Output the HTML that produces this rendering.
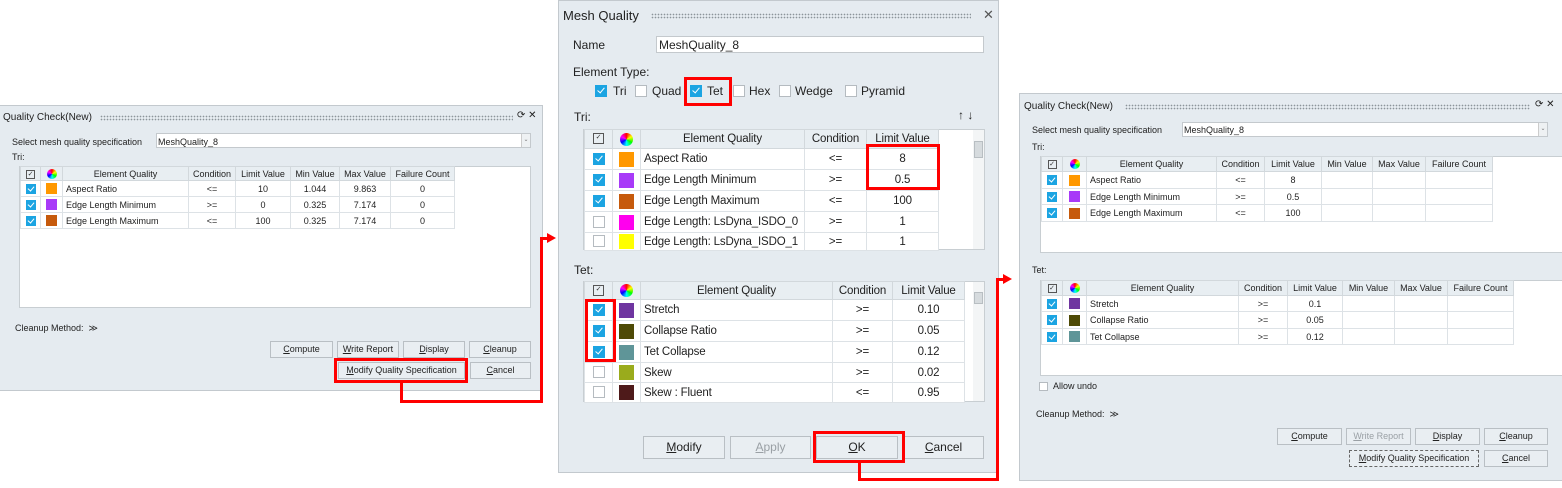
<!DOCTYPE html>
<html><head><meta charset="utf-8"><style>
*{box-sizing:border-box;margin:0;padding:0}
body{width:1562px;height:488px;background:#fff;position:relative;overflow:hidden;font-family:"Liberation Sans",sans-serif;color:#222}
.a{position:absolute}
.panel{position:absolute;background:#e5ebf0;border:1px solid #c3c9ce}
.t{position:absolute;white-space:nowrap}
.dots{position:absolute;height:6px;background-image:radial-gradient(circle,#8c949a 0.7px,transparent 0.9px);background-size:3px 3px}
.btn{position:absolute;background:#e9eef2;border:1px solid #b9bfc4;text-align:center;white-space:nowrap}
.inp{position:absolute;background:#fff;border:1px solid #c4c9cd}
.red{position:absolute;border:3px solid #f00}
.rl{position:absolute;background:#f00}
table{position:absolute;border-collapse:collapse;table-layout:fixed;background:#fff}
td{border:1px solid #dde2e6;white-space:nowrap;overflow:hidden;text-align:center;padding:0}
tr.h td{background:#e8eef2;border-color:#d2d8dc}
td.l{text-align:left;padding-left:3px}
.cb{display:inline-block;width:10px;height:10px;background:#1ba4e2;vertical-align:middle;position:relative}
.cb:after{content:"";position:absolute;left:3px;top:1px;width:3px;height:5px;border:solid #fff;border-width:0 1.3px 1.3px 0;transform:rotate(40deg)}
.cbe{display:inline-block;width:10px;height:10px;background:#fff;border:1px solid #b5bbc0;vertical-align:middle}
.sw{display:inline-block;width:11px;height:11px;vertical-align:middle}
.wh{display:inline-block;width:10px;height:10px;border-radius:50%;background:conic-gradient(red,yellow,lime,cyan,blue,magenta,red);vertical-align:middle}
.hc{display:inline-block;width:9px;height:9px;border:1px solid #555;vertical-align:middle;font-size:7px;line-height:7px;color:#333}
.s{font-size:9px}
.m{font-size:12px}
.mt{font-size:11.5px;letter-spacing:-0.15px}
.big .cb,.big .cbe{width:12px;height:12px}
.big .cb:after{left:4px;top:1px;width:3px;height:6px}
.big .sw{width:15px;height:15px}
.big .wh{width:13px;height:13px}
.big .hc{width:11px;height:11px}
.blk{position:absolute;display:block}
u{text-decoration:underline}
</style></head><body>

<!-- Panel 1 -->
<div class="panel" style="left:-1px;top:105px;width:544px;height:286px"></div>
<div class="t s" style="left:3px;top:112px;font-size:10px">Quality Check(New)</div>
<div class="dots" style="left:100px;top:115px;width:413px"></div>
<div class="t" style="left:517px;top:110px;font-size:10px">⟳ ✕</div>
<div class="t s" style="left:12px;top:137px">Select mesh quality specification</div>
<div class="inp" style="left:156px;top:133px;width:375px;height:15px"></div>
<div class="t s" style="left:158px;top:137px">MeshQuality_8</div>
<div class="a" style="left:521px;top:134px;width:9px;height:13px;background:#eef1f3;border-left:1px solid #ccc;font-size:6px;text-align:center;line-height:13px;color:#777">⌄</div>
<div class="t s" style="left:12px;top:152px">Tri:</div>
<div class="a" style="left:19px;top:166px;width:512px;height:142px;background:#fff;border:1px solid #c8ced2"></div>
<table class="s" style="left:20px;top:166px;width:434px">
<colgroup><col style="width:20px"><col style="width:22px"><col style="width:126px"><col style="width:47px"><col style="width:55px"><col style="width:49px"><col style="width:51px"><col style="width:64px"></colgroup>
<tr class="h" style="height:14px"><td><span class="hc">✓</span></td><td><span class="wh"></span></td><td>Element Quality</td><td>Condition</td><td>Limit Value</td><td>Min Value</td><td>Max Value</td><td>Failure Count</td></tr>
<tr style="height:16px"><td><span class="cb"></span></td><td><span class="sw" style="background:#ff9800"></span></td><td class="l">Aspect Ratio</td><td>&lt;=</td><td>10</td><td>1.044</td><td>9.863</td><td>0</td></tr>
<tr style="height:16px"><td><span class="cb"></span></td><td><span class="sw" style="background:#a83af8"></span></td><td class="l">Edge Length Minimum</td><td>&gt;=</td><td>0</td><td>0.325</td><td>7.174</td><td>0</td></tr>
<tr style="height:16px"><td><span class="cb"></span></td><td><span class="sw" style="background:#c65a0c"></span></td><td class="l">Edge Length Maximum</td><td>&lt;=</td><td>100</td><td>0.325</td><td>7.174</td><td>0</td></tr>
</table>
<div class="t s" style="left:15px;top:323px">Cleanup Method: &nbsp;≫</div>
<div class="btn s" style="left:270px;top:341px;width:63px;height:17px;line-height:15px"><u>C</u>ompute</div>
<div class="btn s" style="left:337px;top:341px;width:62px;height:17px;line-height:15px"><u>W</u>rite Report</div>
<div class="btn s" style="left:403px;top:341px;width:62px;height:17px;line-height:15px"><u>D</u>isplay</div>
<div class="btn s" style="left:469px;top:341px;width:62px;height:17px;line-height:15px"><u>C</u>leanup</div>
<div class="btn s" style="left:338px;top:362px;width:127px;height:17px;line-height:15px"><u>M</u>odify Quality Specification</div>
<div class="btn s" style="left:470px;top:362px;width:61px;height:17px;line-height:15px"><u>C</u>ancel</div>
<div class="red" style="left:334px;top:358px;width:134px;height:25px"></div>
<div class="rl" style="left:400px;top:383px;width:3px;height:20px"></div>
<div class="rl" style="left:400px;top:400px;width:143px;height:3px"></div>
<div class="rl" style="left:540px;top:237px;width:3px;height:166px"></div>
<div class="rl" style="left:540px;top:237px;width:8px;height:3px"></div>
<div class="a" style="left:547px;top:233px;border-left:9px solid #f00;border-top:5px solid transparent;border-bottom:5px solid transparent"></div>

<!-- Panel 2 -->
<div class="panel big" style="left:558px;top:0px;width:441px;height:473px"></div>
<div class="t" style="left:563px;top:8px;font-size:13px">Mesh Quality</div>
<div class="dots" style="left:651px;top:13px;width:320px"></div>
<div class="t" style="left:983px;top:7px;font-size:13px;color:#555">✕</div>
<div class="t m" style="left:573px;top:38px">Name</div>
<div class="inp" style="left:656px;top:36px;width:328px;height:17px"></div>
<div class="t m" style="left:659px;top:38px">MeshQuality_8</div>
<div class="t m" style="left:573px;top:65px">Element Type:</div>
<div class="big">
<span class="cb blk" style="left:595px;top:85px"></span><div class="t m" style="left:613px;top:84px">Tri</div>
<span class="cbe blk" style="left:635px;top:85px"></span><div class="t m" style="left:652px;top:84px">Quad</div>
<span class="cb blk" style="left:690px;top:85px"></span><div class="t m" style="left:707px;top:84px">Tet</div>
<span class="cbe blk" style="left:733px;top:85px"></span><div class="t m" style="left:749px;top:84px">Hex</div>
<span class="cbe blk" style="left:779px;top:85px"></span><div class="t m" style="left:795px;top:84px">Wedge</div>
<span class="cbe blk" style="left:845px;top:85px"></span><div class="t m" style="left:861px;top:84px">Pyramid</div>
</div>
<div class="red" style="left:684px;top:77px;width:48px;height:29px"></div>
<div class="t m" style="left:574px;top:110px">Tri:</div>
<div class="t m" style="left:958px;top:108px">↑ ↓</div>
<div class="a" style="left:583px;top:129px;width:402px;height:121px;background:#fff;border:1px solid #c8ced2"></div>
<div class="a" style="left:973px;top:130px;width:11px;height:119px;background:#f3f5f6"></div>
<div class="a" style="left:974px;top:141px;width:9px;height:17px;background:#d6dbde;border:1px solid #b8bec2"></div>
<table class="mt big" style="left:584px;top:129px;width:354px">
<colgroup><col style="width:28px"><col style="width:28px"><col style="width:164px"><col style="width:62px"><col style="width:72px"></colgroup>
<tr class="h" style="height:19px"><td><span class="hc">✓</span></td><td><span class="wh"></span></td><td>Element Quality</td><td>Condition</td><td>Limit Value</td></tr>
<tr style="height:21px"><td><span class="cb"></span></td><td><span class="sw" style="background:#ff9800"></span></td><td class="l">Aspect Ratio</td><td>&lt;=</td><td>8</td></tr>
<tr style="height:21px"><td><span class="cb"></span></td><td><span class="sw" style="background:#a83af8"></span></td><td class="l">Edge Length Minimum</td><td>&gt;=</td><td>0.5</td></tr>
<tr style="height:21px"><td><span class="cb"></span></td><td><span class="sw" style="background:#c65a0c"></span></td><td class="l">Edge Length Maximum</td><td>&lt;=</td><td>100</td></tr>
<tr style="height:21px"><td><span class="cbe"></span></td><td><span class="sw" style="background:#ff00ee"></span></td><td class="l">Edge Length: LsDyna_ISDO_0</td><td>&gt;=</td><td>1</td></tr>
<tr style="height:18px"><td><span class="cbe"></span></td><td><span class="sw" style="background:#ffff00"></span></td><td class="l">Edge Length: LsDyna_ISDO_1</td><td>&gt;=</td><td>1</td></tr>
</table>
<div class="red" style="left:866px;top:144px;width:74px;height:46px"></div>
<div class="t m" style="left:574px;top:263px">Tet:</div>
<div class="a" style="left:583px;top:281px;width:402px;height:121px;background:#fff;border:1px solid #c8ced2"></div>
<div class="a" style="left:973px;top:282px;width:11px;height:119px;background:#f3f5f6"></div>
<div class="a" style="left:974px;top:292px;width:9px;height:12px;background:#d6dbde;border:1px solid #b8bec2"></div>
<table class="mt big" style="left:584px;top:281px;width:380px">
<colgroup><col style="width:28px"><col style="width:28px"><col style="width:192px"><col style="width:60px"><col style="width:72px"></colgroup>
<tr class="h" style="height:18px"><td><span class="hc">✓</span></td><td><span class="wh"></span></td><td>Element Quality</td><td>Condition</td><td>Limit Value</td></tr>
<tr style="height:21px"><td><span class="cb"></span></td><td><span class="sw" style="background:#6f35a0"></span></td><td class="l">Stretch</td><td>&gt;=</td><td>0.10</td></tr>
<tr style="height:21px"><td><span class="cb"></span></td><td><span class="sw" style="background:#4e4a06"></span></td><td class="l">Collapse Ratio</td><td>&gt;=</td><td>0.05</td></tr>
<tr style="height:21px"><td><span class="cb"></span></td><td><span class="sw" style="background:#5f9598"></span></td><td class="l">Tet Collapse</td><td>&gt;=</td><td>0.12</td></tr>
<tr style="height:20px"><td><span class="cbe"></span></td><td><span class="sw" style="background:#9aab1c"></span></td><td class="l">Skew</td><td>&gt;=</td><td>0.02</td></tr>
<tr style="height:20px"><td><span class="cbe"></span></td><td><span class="sw" style="background:#4e1a1a"></span></td><td class="l">Skew : Fluent</td><td>&lt;=</td><td>0.95</td></tr>
</table>
<div class="red" style="left:585px;top:299px;width:31px;height:63px"></div>
<div class="btn m" style="left:643px;top:436px;width:82px;height:23px;line-height:21px"><u>M</u>odify</div>
<div class="btn m" style="left:730px;top:436px;width:81px;height:23px;line-height:21px;color:#9aa0a5"><u>A</u>pply</div>
<div class="btn m" style="left:816px;top:436px;width:82px;height:23px;line-height:21px"><u>O</u>K</div>
<div class="btn m" style="left:903px;top:436px;width:81px;height:23px;line-height:21px"><u>C</u>ancel</div>
<div class="red" style="left:813px;top:431px;width:92px;height:32px"></div>
<div class="rl" style="left:858px;top:463px;width:3px;height:18px"></div>
<div class="rl" style="left:858px;top:478px;width:141px;height:3px"></div>
<div class="rl" style="left:996px;top:278px;width:3px;height:203px"></div>
<div class="rl" style="left:996px;top:278px;width:8px;height:3px"></div>
<div class="a" style="left:1003px;top:274px;border-left:9px solid #f00;border-top:5px solid transparent;border-bottom:5px solid transparent"></div>

<!-- Panel 3 -->
<div class="panel" style="left:1019px;top:93px;width:545px;height:388px"></div>
<div class="t" style="left:1024px;top:101px;font-size:10px">Quality Check(New)</div>
<div class="dots" style="left:1125px;top:104px;width:405px"></div>
<div class="t" style="left:1535px;top:99px;font-size:10px">⟳ ✕</div>
<div class="t s" style="left:1032px;top:125px">Select mesh quality specification</div>
<div class="inp" style="left:1182px;top:122px;width:366px;height:15px"></div>
<div class="t s" style="left:1184px;top:125px">MeshQuality_8</div>
<div class="a" style="left:1538px;top:123px;width:9px;height:13px;background:#eef1f3;border-left:1px solid #ccc;font-size:6px;text-align:center;line-height:13px;color:#777">⌄</div>
<div class="t s" style="left:1032px;top:142px">Tri:</div>
<div class="a" style="left:1040px;top:156px;width:524px;height:97px;background:#fff;border:1px solid #c8ced2"></div>
<table class="s" style="left:1041px;top:156px;width:451px">
<colgroup><col style="width:21px"><col style="width:24px"><col style="width:130px"><col style="width:48px"><col style="width:57px"><col style="width:51px"><col style="width:53px"><col style="width:67px"></colgroup>
<tr class="h" style="height:15px"><td><span class="hc">✓</span></td><td><span class="wh"></span></td><td>Element Quality</td><td>Condition</td><td>Limit Value</td><td>Min Value</td><td>Max Value</td><td>Failure Count</td></tr>
<tr style="height:17px"><td><span class="cb"></span></td><td><span class="sw" style="background:#ff9800"></span></td><td class="l">Aspect Ratio</td><td>&lt;=</td><td>8</td><td></td><td></td><td></td></tr>
<tr style="height:16px"><td><span class="cb"></span></td><td><span class="sw" style="background:#a83af8"></span></td><td class="l">Edge Length Minimum</td><td>&gt;=</td><td>0.5</td><td></td><td></td><td></td></tr>
<tr style="height:17px"><td><span class="cb"></span></td><td><span class="sw" style="background:#c65a0c"></span></td><td class="l">Edge Length Maximum</td><td>&lt;=</td><td>100</td><td></td><td></td><td></td></tr>
</table>
<div class="t s" style="left:1032px;top:265px">Tet:</div>
<div class="a" style="left:1040px;top:280px;width:524px;height:96px;background:#fff;border:1px solid #c8ced2"></div>
<table class="s" style="left:1041px;top:280px;width:472px">
<colgroup><col style="width:21px"><col style="width:24px"><col style="width:152px"><col style="width:49px"><col style="width:55px"><col style="width:52px"><col style="width:53px"><col style="width:66px"></colgroup>
<tr class="h" style="height:15px"><td><span class="hc">✓</span></td><td><span class="wh"></span></td><td>Element Quality</td><td>Condition</td><td>Limit Value</td><td>Min Value</td><td>Max Value</td><td>Failure Count</td></tr>
<tr style="height:16px"><td><span class="cb"></span></td><td><span class="sw" style="background:#6f35a0"></span></td><td class="l">Stretch</td><td>&gt;=</td><td>0.1</td><td></td><td></td><td></td></tr>
<tr style="height:17px"><td><span class="cb"></span></td><td><span class="sw" style="background:#4e4a06"></span></td><td class="l">Collapse Ratio</td><td>&gt;=</td><td>0.05</td><td></td><td></td><td></td></tr>
<tr style="height:16px"><td><span class="cb"></span></td><td><span class="sw" style="background:#5f9598"></span></td><td class="l">Tet Collapse</td><td>&gt;=</td><td>0.12</td><td></td><td></td><td></td></tr>
</table>
<span class="cbe blk" style="left:1039px;top:382px;width:9px;height:9px"></span>
<div class="t s" style="left:1053px;top:381px">Allow undo</div>
<div class="t s" style="left:1036px;top:409px">Cleanup Method: &nbsp;≫</div>
<div class="btn s" style="left:1277px;top:428px;width:65px;height:17px;line-height:15px"><u>C</u>ompute</div>
<div class="btn s" style="left:1346px;top:428px;width:65px;height:17px;line-height:15px;color:#9aa0a5"><u>W</u>rite Report</div>
<div class="btn s" style="left:1415px;top:428px;width:65px;height:17px;line-height:15px"><u>D</u>isplay</div>
<div class="btn s" style="left:1484px;top:428px;width:64px;height:17px;line-height:15px"><u>C</u>leanup</div>
<div class="btn s" style="left:1349px;top:450px;width:130px;height:17px;line-height:15px;border:1px dashed #666"><u>M</u>odify Quality Specification</div>
<div class="btn s" style="left:1484px;top:450px;width:64px;height:17px;line-height:15px"><u>C</u>ancel</div>

</body></html>
